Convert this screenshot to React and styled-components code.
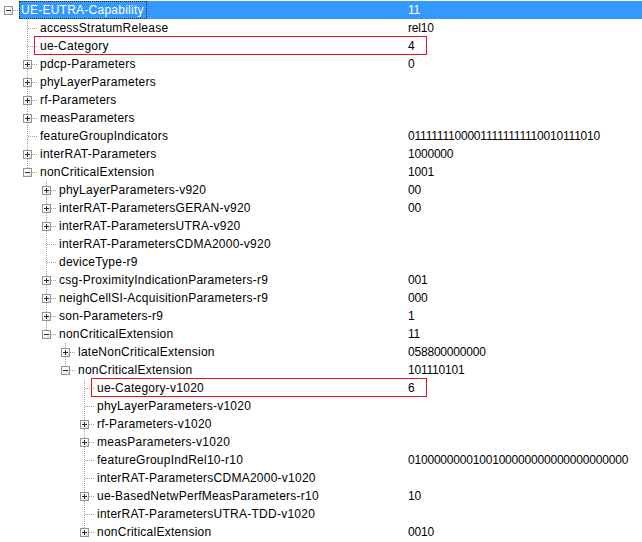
import React from "react";
import styled, { createGlobalStyle, css } from "styled-components";

const GlobalStyle = createGlobalStyle`
  html, body {
    margin: 0;
    padding: 0;
    background: #ffffff;
  }
  body {
    font-family: "Liberation Sans", Arial, sans-serif;
    font-size: 12px;
    color: #000;
  }
`;

const n = (name, value, children, opts = {}) => ({ name, value, children, ...opts });

const tree = n("UE-EUTRA-Capability", "11", [
  n("accessStratumRelease", "rel10"),
  n("ue-Category", "4", null, { marked: true }),
  n("pdcp-Parameters", "0", []),
  n("phyLayerParameters", "", []),
  n("rf-Parameters", "", []),
  n("measParameters", "", []),
  n("featureGroupIndicators", "01111111000011111111110010111010"),
  n("interRAT-Parameters", "1000000", []),
  n(
    "nonCriticalExtension",
    "1001",
    [
      n("phyLayerParameters-v920", "00", []),
      n("interRAT-ParametersGERAN-v920", "00", []),
      n("interRAT-ParametersUTRA-v920", "", []),
      n("interRAT-ParametersCDMA2000-v920", ""),
      n("deviceType-r9", ""),
      n("csg-ProximityIndicationParameters-r9", "001", []),
      n("neighCellSI-AcquisitionParameters-r9", "000", []),
      n("son-Parameters-r9", "1", []),
      n(
        "nonCriticalExtension",
        "11",
        [
          n("lateNonCriticalExtension", "058800000000", []),
          n(
            "nonCriticalExtension",
            "101110101",
            [
              n("ue-Category-v1020", "6", null, { marked: true }),
              n("phyLayerParameters-v1020", ""),
              n("rf-Parameters-v1020", "", []),
              n("measParameters-v1020", "", []),
              n("featureGroupIndRel10-r10", "0100000000100100000000000000000000"),
              n("interRAT-ParametersCDMA2000-v1020", ""),
              n("ue-BasedNetwPerfMeasParameters-r10", "10", []),
              n("interRAT-ParametersUTRA-TDD-v1020", ""),
              n("nonCriticalExtension", "0010", []),
            ],
            { open: true }
          ),
        ],
        { open: true }
      ),
    ],
    { open: true }
  ),
], { open: true, selected: true });

// flatten the tree into rows, keeping which ancestors still have siblings below
function flatten(node, depth, guides, isLast, out) {
  out.push({ node, depth, guides, isLast });
  if (node.children && node.open) {
    node.children.forEach((child, i) => {
      const last = i === node.children.length - 1;
      flatten(child, depth + 1, depth >= 1 ? [...guides, !isLast] : guides, last, out);
    });
  }
  return out;
}

const INDENT = 19;
const LINE = "#a0a0a0";

const dotsV = css`
  background-image: linear-gradient(to bottom, ${LINE} 50%, transparent 50%);
  background-size: 1px 2px;
`;
const dotsH = css`
  background-image: linear-gradient(to right, ${LINE} 50%, transparent 50%);
  background-size: 2px 1px;
`;

const Tree = styled.div`
  width: 642px;
  padding-top: 1px;
`;

const Row = styled.div`
  position: relative;
  display: flex;
  height: 18px;
  line-height: 18px;
  white-space: nowrap;
`;

const Guide = styled.span`
  position: relative;
  flex: none;
  width: ${INDENT}px;
  height: 18px;

  &::before {
    content: "";
    position: absolute;
    left: 8px;
    width: 1px;
    top: 0;
    ${dotsV};
    display: ${(p) => (p.$kind === "none" || p.$kind === "root" ? "none" : "block")};
    height: ${(p) => (p.$kind === "end" ? "10px" : "18px")};
  }

  &::after {
    content: "";
    position: absolute;
    top: 9px;
    left: 9px;
    right: 0;
    height: 1px;
    ${dotsH};
    display: ${(p) => (p.$kind === "end" || p.$kind === "tee" || p.$kind === "root" ? "block" : "none")};
  }
`;

const Toggle = styled.span`
  position: absolute;
  z-index: 1;
  left: 4px;
  top: 5px;
  width: 7px;
  height: 7px;
  border: 1px solid #949494;
  background: linear-gradient(to bottom right, #ffffff 30%, #dcdcdc);

  &::before {
    content: "";
    position: absolute;
    left: 1px;
    top: 3px;
    width: 5px;
    height: 1px;
    background: #1c2a4a;
  }

  &::after {
    content: "";
    position: absolute;
    left: 3px;
    top: 1px;
    width: 1px;
    height: 5px;
    background: #1c2a4a;
    display: ${(p) => (p.$open ? "none" : "block")};
  }
`;

const Name = styled.span`
  flex: 1;
  min-width: 0;
  height: 18px;
  background: ${(p) => (p.$selected ? "#3399ff" : "transparent")};
`;

const Label = styled.span`
  display: inline-block;
  box-sizing: border-box;
  height: 18px;
  padding: 0 2px 0 1px;
  color: ${(p) => (p.$selected ? "#ffffff" : "#000000")};
  border: 1px dotted ${(p) => (p.$selected ? "#3a2a10" : "transparent")};
  line-height: 16px;
  letter-spacing: 0.25px;
`;

const Value = styled.span`
  flex: none;
  width: 234px;
  padding-left: 4px;
  color: ${(p) => (p.$selected ? "#ffffff" : "#000000")};
  background: ${(p) => (p.$selected ? "#3399ff" : "transparent")};
  letter-spacing: -0.2px;
`;

const Mark = styled.span`
  position: absolute;
  top: -1px;
  height: 17px;
  right: 215px;
  border: 1px solid #e3141c;
  pointer-events: none;
`;

function TreeRow({ row }) {
  const { node, depth, guides, isLast } = row;
  const hasKids = Array.isArray(node.children);
  const cells = [];

  if (depth === 0) {
    cells.push(
      <Guide key="own" $kind="root">
        {hasKids && <Toggle $open={node.open} />}
      </Guide>
    );
  } else {
    cells.push(<Guide key="root" $kind="none" />);
    guides.forEach((cont, i) => cells.push(<Guide key={"g" + i} $kind={cont ? "full" : "none"} />));
    cells.push(
      <Guide key="own" $kind={isLast ? "end" : "tee"}>
        {hasKids && <Toggle $open={node.open} />}
      </Guide>
    );
  }

  return (
    <Row>
      {cells}
      <Name $selected={node.selected}>
        <Label $selected={node.selected}>{node.name}</Label>
      </Name>
      <Value $selected={node.selected}>{node.value}</Value>
      {node.marked && <Mark style={{ left: INDENT * (depth + 1) - 4 }} />}
    </Row>
  );
}

export default function App() {
  const rows = flatten(tree, 0, [], true, []);
  return (
    <>
      <GlobalStyle />
      <Tree>
        {rows.map((r, i) => (
          <TreeRow key={i} row={r} />
        ))}
      </Tree>
    </>
  );
}
